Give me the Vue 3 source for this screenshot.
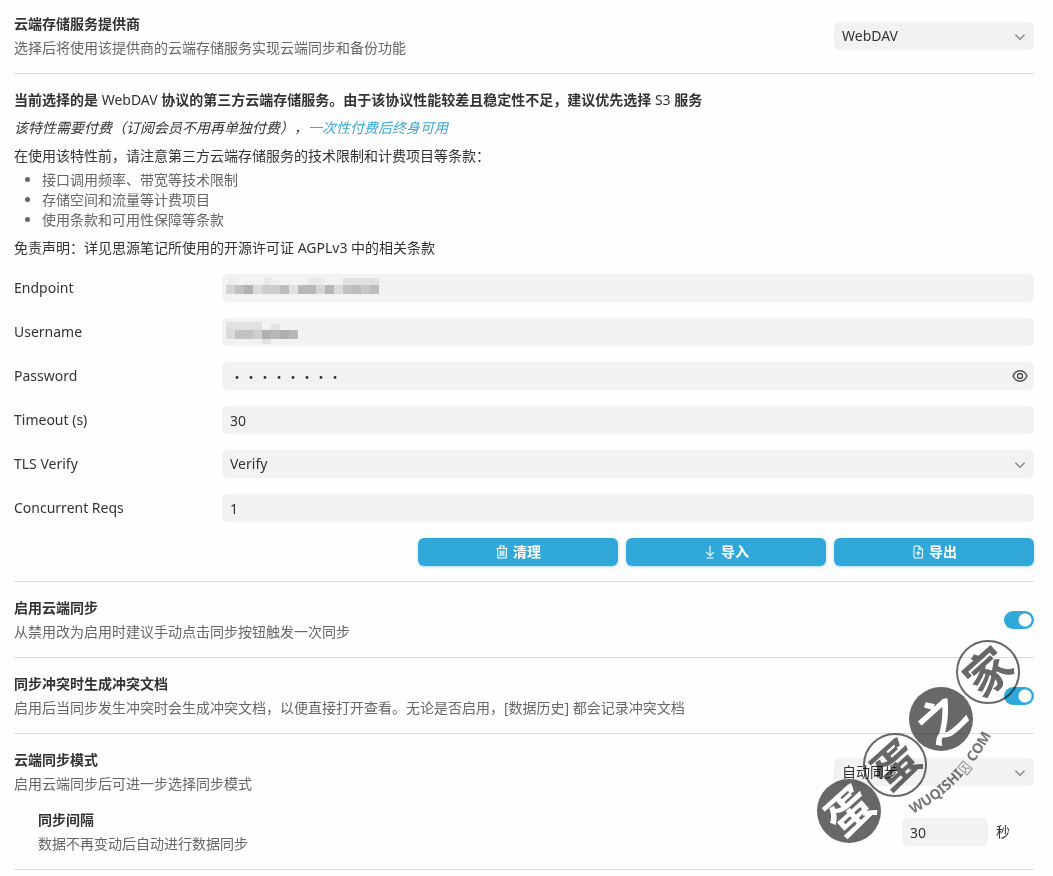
<script setup>
import { ref } from 'vue'

const provider = ref('WebDAV')
const endpoint = ref('')
const username = ref('')
const password = ref('password')
const timeout = ref('30')
const tls = ref('Verify')
const reqs = ref('1')
const syncOn = ref(true)
const conflictOn = ref(true)
const mode = ref('自动同步')
const interval = ref('30')

// Censor mosaic cells: x, y, width, height, grey level
const endpointMask = [
  [2, 0, 8, 9, 236], [38, 0, 7, 9, 232], [46, 2, 9, 7, 238], [82, 0, 17, 9, 234], [117, 0, 36, 9, 224],
  [0, 7, 9, 9, 212], [9, 7, 9, 9, 192], [18, 7, 9, 9, 178], [27, 7, 9, 9, 218], [36, 7, 18, 9, 205],
  [54, 7, 9, 9, 188], [63, 7, 9, 9, 224], [72, 7, 18, 9, 184], [90, 7, 9, 9, 214], [99, 7, 9, 9, 182],
  [108, 7, 9, 9, 218], [117, 7, 9, 9, 194], [126, 7, 9, 9, 188], [135, 7, 9, 9, 200], [144, 7, 9, 9, 190]
]
const usernameMask = [
  [0, 0, 36, 9, 224], [45, 2, 9, 7, 228], [0, 7, 9, 10, 218], [9, 8, 18, 9, 194], [27, 8, 9, 9, 206],
  [36, 8, 9, 9, 176], [45, 8, 9, 9, 184], [54, 8, 9, 9, 174], [63, 8, 9, 9, 184], [36, 17, 9, 5, 226]
]
</script>

<template>
  <main class="panel">
    <section class="row">
      <div class="info">
        <label class="title" for="provider">云端存储服务提供商</label>
        <p class="desc">选择后将使用该提供商的云端存储服务实现云端同步和备份功能</p>
      </div>
      <span class="select short">
        <select id="provider" v-model="provider"><option>WebDAV</option><option>S3</option></select>
        <svg class="chev" viewBox="0 0 12 12"><path d="M1.5 3.8 6 8.2l4.500-4.400" /></svg>
      </span>
    </section>

    <section class="row block">
      <p class="lead"><b>当前选择的是</b> WebDAV <b>协议的第三方云端存储服务。由于该协议性能较差且稳定性不足，建议优先选择</b> S3 <b>服务</b></p>
      <p class="note"><em>该特性需要付费（订阅会员不用再单独付费），<a href="#">一次性付费后终身可用</a></em></p>
      <p class="terms">在使用该特性前，请注意第三方云端存储服务的技术限制和计费项目等条款：</p>
      <ul>
        <li>接口调用频率、带宽等技术限制</li>
        <li>存储空间和流量等计费项目</li>
        <li>使用条款和可用性保障等条款</li>
      </ul>
      <p class="note">免责声明：详见思源笔记所使用的开源许可证 AGPLv3 中的相关条款</p>

      <div class="form">
        <label for="endpoint">Endpoint</label>
        <span class="field">
          <input id="endpoint" v-model="endpoint" type="text" />
          <svg class="mask" width="160" height="24"><rect v-for="(c, i) in endpointMask" :key="i" :x="c[0]" :y="c[1]" :width="c[2]" :height="c[3]" :fill="`rgb(${c[4]},${c[4]},${c[4]})`" /></svg>
        </span>
        <label for="username">Username</label>
        <span class="field">
          <input id="username" v-model="username" type="text" />
          <svg class="mask" width="160" height="24"><rect v-for="(c, i) in usernameMask" :key="i" :x="c[0]" :y="c[1]" :width="c[2]" :height="c[3]" :fill="`rgb(${c[4]},${c[4]},${c[4]})`" /></svg>
        </span>
        <label for="password">Password</label>
        <span class="field">
          <input id="password" v-model="password" class="secret" type="password" />
          <button class="eye" type="button" aria-label="显示密码">
            <svg viewBox="0 0 16 14"><path d="M1 7c1.500-3.400 4-5.200 7-5.200S13.500 3.600 15 7c-1.500 3.400-4 5.200-7 5.200S2.500 10.400 1 7Z" /><circle cx="8" cy="7" r="2.500" /></svg>
          </button>
        </span>
        <label for="timeout">Timeout (s)</label>
        <span class="field"><input id="timeout" v-model="timeout" type="text" /></span>
        <label for="tls">TLS Verify</label>
        <span class="select">
          <select id="tls" v-model="tls"><option>Verify</option><option>Skip</option></select>
          <svg class="chev" viewBox="0 0 12 12"><path d="M1.5 3.8 6 8.2l4.500-4.400" /></svg>
        </span>
        <label for="reqs">Concurrent Reqs</label>
        <span class="field"><input id="reqs" v-model="reqs" type="text" /></span>
      </div>

      <div class="actions">
        <button type="button">
          <svg viewBox="0 0 14 14"><path d="M1.500 3.500h11M5 3.300V1h4v2.300M2.500 3.500l.4 9.500h8.200l.4-9.500M5.200 5.500v5.500M7 5.500v5.500M8.800 5.500v5.500" /></svg>清理
        </button>
        <button type="button">
          <svg viewBox="0 0 14 14"><path d="M7 1v9.500M3 6.800l4 4 4-4M3.500 13h7" /></svg>导入
        </button>
        <button type="button">
          <svg viewBox="0 0 14 14"><path d="M4 1h4l3.500 3.500V12q0 1-1 1H4q-1 0-1-1V2q0-1 1-1ZM8 1v3.500h3.500M7.200 10.800V6.800M5.300 8.600l1.900-1.900 1.900 1.900" /></svg>导出
        </button>
      </div>
    </section>

    <section class="row">
      <div class="info">
        <label class="title" for="sync">启用云端同步</label>
        <p class="desc">从禁用改为启用时建议手动点击同步按钮触发一次同步</p>
      </div>
      <input id="sync" v-model="syncOn" class="switch" type="checkbox" />
    </section>

    <section class="row">
      <div class="info">
        <label class="title" for="conflict">同步冲突时生成冲突文档</label>
        <p class="desc">启用后当同步发生冲突时会生成冲突文档，以便直接打开查看。无论是否启用，[数据历史] 都会记录冲突文档</p>
      </div>
      <input id="conflict" v-model="conflictOn" class="switch" type="checkbox" />
    </section>

    <section class="row block">
      <div class="line">
        <div class="info">
          <label class="title" for="mode">云端同步模式</label>
          <p class="desc">启用云端同步后可进一步选择同步模式</p>
        </div>
        <span class="select short">
          <select id="mode" v-model="mode"><option>自动同步</option><option>手动同步</option></select>
          <svg class="chev" viewBox="0 0 12 12"><path d="M1.5 3.8 6 8.2l4.500-4.400" /></svg>
        </span>
      </div>
      <div class="line sub">
        <div class="info">
          <label class="title" for="interval">同步间隔</label>
          <p class="desc">数据不再变动后自动进行数据同步</p>
        </div>
        <span class="interval"><input id="interval" v-model="interval" type="text" /><span>秒</span></span>
      </div>
    </section>

    <svg class="watermark" viewBox="-14 -16 240 240" aria-hidden="true">
      <g class="solid"><circle cx="37" cy="172" r="32" /><circle cx="129" cy="80" r="32" /></g>
      <g class="ring"><circle cx="83" cy="126" r="31" /><circle cx="176" cy="33" r="31" /></g>
      <g class="seal">
        <text class="light" transform="translate(37 172) rotate(-42)" y="17">蛋</text>
        <text transform="translate(83 126) rotate(-42)" y="17">蛋</text>
        <text class="light" transform="translate(129 80) rotate(-42)" y="17">之</text>
        <text transform="translate(176 33) rotate(-42)" y="17">家</text>
      </g>
      <path id="arc" d="M101 175Q156 146 184 86" fill="none" />
      <text class="site"><textPath href="#arc">WUQISHI</textPath></text>
      <text class="site"><textPath href="#arc" startOffset="80">COM</textPath></text>
      <g class="emblem" transform="translate(153 129) rotate(-50)"><rect x="-4" y="-6" width="8" height="12" /><path d="M-2-3h4M0-3v3M-3 4l3-4 3 4" /></g>
    </svg>
  </main>
</template>

<style>
body {
  background: #fefefe;
}
</style>

<style scoped>
.panel {
  position: relative;
  box-sizing: border-box;
  padding: 0 19px 0 14px;
  color: #333;
  font: 14px/20px "Noto Sans", "Noto Sans CJK SC", sans-serif;
}
p, ul {
  margin: 0;
}
input, select, button {
  font: inherit;
  color: inherit;
  border: 0;
}
.row {
  display: flex;
  align-items: center;
  gap: 16px;
  padding: 16px 0 15px;
  border-bottom: 1px solid #dcdcdc;
}
.row:first-child {
  padding-top: 14px;
}
.row.block {
  display: block;
}
.line {
  display: flex;
  align-items: center;
  gap: 16px;
}
.info {
  flex: 1;
}
.title {
  display: block;
  font-weight: 700;
}
.desc {
  margin-top: 4px;
  color: #666;
}
.note, .terms {
  margin-top: 8px;
  text-spacing-trim: space-all;
}
a {
  color: #35a9d8;
  text-decoration: none;
}
ul {
  margin-top: 4px;
  padding-left: 28px;
  color: #666;
}
.form {
  display: grid;
  grid-template-columns: 200px 1fr;
  gap: 16px 8px;
  align-items: center;
  margin-top: 16px;
}
.field, .select {
  position: relative;
  display: block;
}
.field input, .select select, .interval input {
  display: block;
  box-sizing: border-box;
  width: 100%;
  height: 28px;
  padding: 4px 8px;
  border-radius: 6px;
  background: #f2f2f2;
  outline: none;
  appearance: none;
}
.field .secret {
  font-family: "Noto Sans CJK SC", sans-serif;
}
.short {
  width: 200px;
}
.chev {
  position: absolute;
  right: 8px;
  top: 9px;
  width: 12px;
  height: 12px;
  fill: none;
  stroke: #888;
  stroke-width: 1.5;
  pointer-events: none;
}
.mask {
  position: absolute;
  left: 4px;
  top: 4px;
}
.eye {
  position: absolute;
  right: 6px;
  top: 7px;
  width: 16px;
  height: 14px;
  padding: 0;
  background: none;
}
.eye svg {
  display: block;
  fill: none;
  stroke: #555;
  stroke-width: 1.4;
}
.actions {
  display: flex;
  justify-content: flex-end;
  gap: 8px;
  margin-top: 16px;
}
.actions button {
  display: flex;
  align-items: center;
  justify-content: center;
  gap: 4px;
  width: 200px;
  height: 28px;
  padding: 0;
  border-radius: 6px;
  background: #30a9da;
  box-shadow: 0 1px 3px #30a9da66;
  color: #fff;
  font-weight: 700;
}
.actions svg {
  width: 14px;
  height: 14px;
  fill: none;
  stroke: #fff;
  stroke-width: 1.1;
}
.switch {
  appearance: none;
  width: 30px;
  height: 18px;
  margin: 0;
  border-radius: 9px;
  background: radial-gradient(circle at 21px 9px, #fff 6px, #30a9da 7px);
}
.sub {
  margin-top: 16px;
  padding-left: 24px;
}
.interval {
  display: flex;
  align-items: center;
  gap: 8px;
  width: 132px;
}
.interval input {
  width: 86px;
}
.watermark {
  position: absolute;
  right: 15px;
  bottom: 7px;
  width: 240px;
  height: 240px;
  overflow: visible;
  pointer-events: none;
  mix-blend-mode: multiply;
}
.solid {
  fill: #686868;
}
.ring {
  fill: none;
  stroke: #686868;
  stroke-width: 2;
}
.seal text {
  font-size: 46px;
  font-weight: 700;
  text-anchor: middle;
  fill: #686868;
}
.seal .light {
  fill: #fff;
}
.site {
  font-size: 14px;
  font-weight: 700;
  fill: #777;
}
.emblem {
  fill: none;
  stroke: #999;
}
</style>
